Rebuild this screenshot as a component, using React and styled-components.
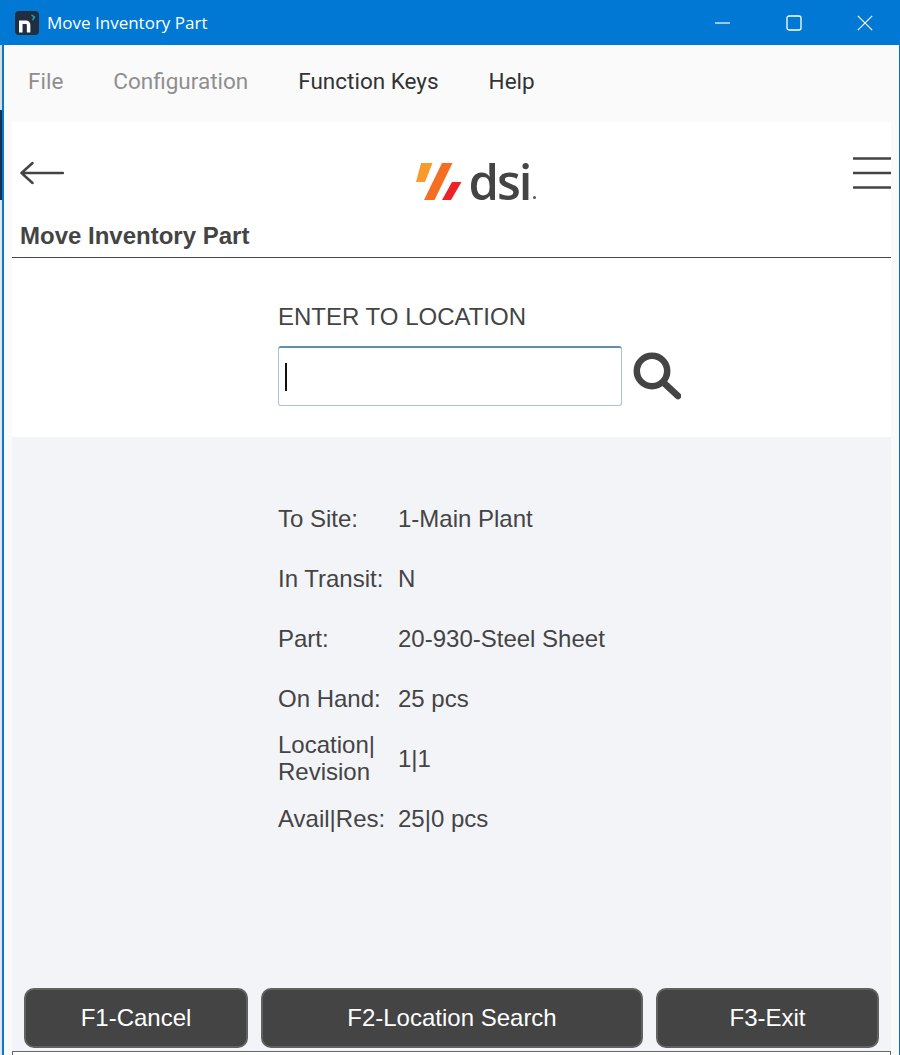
import React from 'react';
import styled, { createGlobalStyle } from 'styled-components';

const Global = createGlobalStyle`
  html, body { margin: 0; padding: 0; height: 1055px; overflow: hidden; background: #e9e9ea; }
  #root { height: 1055px; }
  * { box-sizing: border-box; }
`;

const Page = styled.div`
  width: 900px; height: 1055px; display: flex; flex-direction: column; overflow: hidden;
  background: linear-gradient(#dcdcde 0 110px, #17324f 110px 200px, #e6e6e8 200px);
`;
const TitleBar = styled.header`
  height: 45px; flex: none; background: #0078d4; color: #fff; display: flex; align-items: center;
  padding-left: 15px; font: 400 17px "Open Sans", "Noto Sans", sans-serif;
`;
const AppIcon = styled.svg`width: 24px; height: 24px; flex: none; margin-right: 8px;`;
const TitleText = styled.span`flex: 1;`;
const WinButton = styled.div`
  width: 71px; height: 45px; display: flex; align-items: center; justify-content: center;
`;
const Frame = styled.div`
  flex: 1; min-height: 0; margin-left: 2px; border-left: 2px solid #0078d4; border-right: 1px solid #0078d4;
  background: #fafafa; display: flex; flex-direction: column;
`;
const MenuBar = styled.nav`
  height: 77px; flex: none; display: flex; align-items: center; padding: 0 0 6px 24px; gap: 50px;
  font: 400 22.5px Roboto, sans-serif;
`;
const MenuItem = styled.span`color: ${p => (p.$disabled ? '#8f8f8f' : '#333')};`;
const Content = styled.main`
  flex: 1; min-height: 0; margin: 0 8px; display: flex; flex-direction: column;
  font-family: "Liberation Sans", Arial, sans-serif; color: #444;
`;
const Header = styled.div`
  height: 136px; flex: none; background: #fff; border-bottom: 1px solid #454545;
  display: flex; flex-direction: column;
`;
const HeaderRow = styled.div`
  height: 98px; flex: none; display: flex; align-items: center; justify-content: space-between;
  padding: 4px 0 0 8px;
`;
const Logo = styled.div`
  display: flex; align-items: flex-end; width: 121px; height: 38px; margin: 17px 0 0 35px; flex: none;
`;
const LogoWord = styled.span`
  font: 600 49px/38px "Open Sans", sans-serif; color: #444; letter-spacing: -2px; margin-left: 7px;
  height: 38px; display: block; transform: translateY(-1px);
`;
const LogoDot = styled.i`
  display: block; width: 3px; height: 3px; border-radius: 50%; background: #555; margin: 0 0 2px 2px; flex: none;
`;
const PageTitle = styled.h1`
  margin: 0; padding-left: 8px; font: 700 24px/32px "Liberation Sans", Arial, sans-serif; color: #444;
`;
const EntrySection = styled.section`
  height: 179px; flex: none; background: #fff; padding: 44px 0 0 266px;
`;
const EntryLabel = styled.label`display: block; font-size: 24px; line-height: 30px; color: #444;`;
const EntryRow = styled.div`display: flex; align-items: center; margin-top: 14px;`;
const EntryInput = styled.div`
  width: 344px; height: 60px; border: 1.5px solid #a6c3d8; border-top: 2px solid #5f8fae;
  border-radius: 3px; background: #fff; display: flex; align-items: center; padding-left: 6px;
`;
const Caret = styled.i`display: block; width: 1.5px; height: 28px; background: #111;`;
const SearchIcon = styled.svg`width: 50px; height: 50px; margin-left: 9px;`;
const InfoPanel = styled.section`
  flex: 1; min-height: 0; background: #f3f4f8; display: flex; flex-direction: column;
  justify-content: space-between; padding: 51px 12px 3px;
`;
const InfoGrid = styled.dl`
  margin: 0; padding-left: 254px; display: grid; grid-template-columns: 120px 1fr;
  font-size: 24px; line-height: 27px; color: #444;
`;
const Key = styled.dt`display: flex; align-items: center; min-height: 60px; white-space: pre-line;`;
const Val = styled.dd`margin: 0; display: flex; align-items: center; min-height: 60px;`;
const Footer = styled.footer`display: flex; gap: 13px; height: 60px;`;
const FnButton = styled.button`
  flex: none; width: ${p => p.$w}px; height: 60px; background: #444; color: #fff;
  border: 2px solid #616161; border-radius: 10px; font: 400 24px "Liberation Sans", Arial, sans-serif;
`;
const BottomEdge = styled.div`
  height: 4px; flex: none; background: #fff; border: 1px solid #666; border-bottom: 0;
`;

const rows = [
  ['To Site:', '1-Main Plant'],
  ['In Transit:', 'N'],
  ['Part:', '20-930-Steel Sheet'],
  ['On Hand:', '25 pcs'],
  ['Location|\nRevision', '1|1'],
  ['Avail|Res:', '25|0 pcs'],
];

export default function App() {
  return (
    <Page>
      <Global />
      <TitleBar>
        <AppIcon viewBox="0 0 24 24">
          <rect width="24" height="24" rx="4" fill="#1f2f3f" />
          <path d="M5.800 21.500V11.200H11a2.600 2.600 0 0 1 2.600 2.600V21.500" fill="none" stroke="#fff" strokeWidth="3.500" />
          <path d="M16.500 4l3 2.200-2 3" fill="none" stroke="#19a4c4" strokeWidth="1.500" />
        </AppIcon>
        <TitleText>Move Inventory Part</TitleText>
        <WinButton>
          <svg width="16" height="2" viewBox="0 0 16 2"><path d="M0 1h15" stroke="#fff" strokeWidth="1.200" /></svg>
        </WinButton>
        <WinButton>
          <svg width="16" height="16" viewBox="0 0 16 16"><rect x="1" y="1" width="14" height="14" rx="2" fill="none" stroke="#fff" strokeWidth="1.300" /></svg>
        </WinButton>
        <WinButton>
          <svg width="16" height="16" viewBox="0 0 16 16"><path d="M.8.8l14.400 14.400M15.200.8L.8 15.200" stroke="#fff" strokeWidth="1.200" /></svg>
        </WinButton>
      </TitleBar>
      <Frame>
        <MenuBar>
          <MenuItem $disabled>File</MenuItem>
          <MenuItem $disabled>Configuration</MenuItem>
          <MenuItem>Function Keys</MenuItem>
          <MenuItem>Help</MenuItem>
        </MenuBar>
        <Content>
          <Header>
            <HeaderRow>
              <svg width="44" height="24" viewBox="0 0 44 24">
                <path d="M43 12H1.500M12.500 2 1.500 12l11 10" fill="none" stroke="#444" strokeWidth="2.500" strokeLinecap="round" strokeLinejoin="round" />
              </svg>
              <Logo>
                <svg width="46" height="38" viewBox="0 0 46 38" style={{ flex: 'none' }}>
                  <path d="M5 0h11.500L9 19H0z" fill="#f99b2c" />
                  <path d="M26 0h10.500L18.500 37H8z" fill="#f56f23" />
                  <path d="M36 19h9.500L35 37H26z" fill="#ec2227" />
                </svg>
                <LogoWord>dsi</LogoWord>
                <LogoDot />
              </Logo>
              <svg width="38" height="34" viewBox="0 0 38 34">
                <path d="M0 2.500h38M0 17h38M0 31.500h38" stroke="#444" strokeWidth="2.600" />
              </svg>
            </HeaderRow>
            <PageTitle>Move Inventory Part</PageTitle>
          </Header>
          <EntrySection>
            <EntryLabel>ENTER TO LOCATION</EntryLabel>
            <EntryRow>
              <EntryInput><Caret /></EntryInput>
              <SearchIcon viewBox="0 0 50 50">
                <circle cx="21" cy="20" r="15.200" fill="none" stroke="#444" strokeWidth="6.500" />
                <path d="M33 32l14 13" stroke="#444" strokeWidth="6.500" strokeLinecap="round" />
              </SearchIcon>
            </EntryRow>
          </EntrySection>
          <InfoPanel>
            <InfoGrid>
              {rows.map(([k, v]) => (
                <React.Fragment key={k}>
                  <Key><span>{k}</span></Key>
                  <Val>{v}</Val>
                </React.Fragment>
              ))}
            </InfoGrid>
            <Footer>
              <FnButton $w={224}>F1-Cancel</FnButton>
              <FnButton $w={382}>F2-Location Search</FnButton>
              <FnButton $w={223}>F3-Exit</FnButton>
            </Footer>
          </InfoPanel>
          <BottomEdge />
        </Content>
      </Frame>
    </Page>
  );
}
